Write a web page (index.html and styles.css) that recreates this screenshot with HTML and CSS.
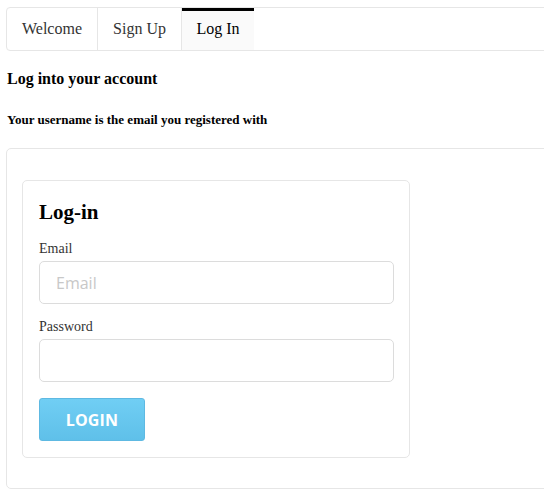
FILE: index.html
```html
<!DOCTYPE html>
<html>
<head>
<meta charset="utf-8">
<link rel="stylesheet" href="styles.css">
</head>
<body>
<div class="page">
  <nav class="tabs">
    <div class="tab">Welcome</div>
    <div class="tab">Sign Up</div>
    <div class="tab active">Log In</div>
  </nav>
  <h3 class="title">Log into your account</h3>
  <h5 class="subtitle">Your username is the email you registered with</h5>
  <div class="panel">
    <form class="card">
      <h2 class="card-title">Log-in</h2>
      <label class="label">Email</label>
      <input class="input" type="text" placeholder="Email">
      <label class="label">Password</label>
      <input class="input" type="password">
      <button class="btn" type="button">LOGIN</button>
    </form>
  </div>
</div>
</body>
</html>
```

FILE: styles.css
```css
html, body {
  margin: 0;
  padding: 0;
  overflow: hidden;
  background: #fff;
}
body {
  font-family: "Liberation Serif", "Times New Roman", serif;
  color: #000;
}
.page {
  padding: 7px 0 0 6px;
  width: 560px;
}
.tabs {
  display: flex;
  height: 42px;
  border: 1px solid #e6e6e6;
  border-radius: 4px;
  overflow: hidden;
}
.tab {
  display: flex;
  align-items: center;
  justify-content: center;
  font-size: 16px;
  color: #333;
  border-right: 1px solid #e6e6e6;
  padding: 0 0 1px;
}
.tab:nth-child(1) { width: 90px; }
.tab:nth-child(2) { width: 83px; }
.tab.active {
  width: 72px;
  background: #fafafa;
  color: #000;
  border-top: 3px solid #000;
  border-right: none;
  padding-bottom: 4px;
  box-sizing: border-box;
}
.title {
  margin: 19px 0 0 1px;
  font-size: 16px;
  font-weight: bold;
  line-height: 18px;
}
.subtitle {
  margin: 24px 0 0 1px;
  font-size: 13px;
  font-weight: bold;
  line-height: 15px;
}
.panel {
  margin-top: 21px;
  border: 1px solid #e6e6e6;
  border-radius: 5px;
  padding: 31px 0 30px 15px;
}
.card {
  width: 354px;
  border: 1px solid #e6e6e6;
  border-radius: 5px;
  padding: 16px;
  display: flex;
  flex-direction: column;
  align-items: flex-start;
}
.card-title {
  margin: 0;
  font-size: 21px;
  font-weight: bold;
  line-height: 30px;
}
.label {
  margin-top: 14px;
  font-size: 14px;
  line-height: 16px;
  color: #333;
}
.input {
  margin-top: 4px;
  box-sizing: border-box;
  width: 355px;
  height: 43px;
  border: 1px solid #dcdcdc;
  border-radius: 5px;
  padding: 0 16px;
  font-family: "Open Sans", "Noto Sans", sans-serif;
  font-size: 16px;
  color: #333;
  background: #fff;
  outline: none;
}
.input::placeholder {
  color: #c8c8c8;
}
.input + .label { margin-top: 15px; }
.btn {
  margin-top: 16px;
  width: 106px;
  height: 43px;
  box-sizing: border-box;
  border: 1px solid #5eb9e2;
  border-radius: 3px;
  background: linear-gradient(#70cef4, #5fc0e9);
  color: #fff;
  font-family: "Open Sans", "Noto Sans", sans-serif;
  font-weight: bold;
  font-size: 16px;
  letter-spacing: 0.2px;
  padding: 0;
}
```
